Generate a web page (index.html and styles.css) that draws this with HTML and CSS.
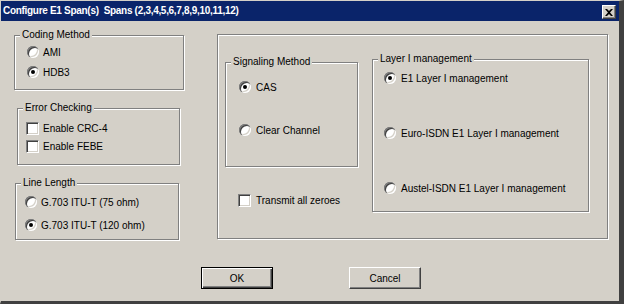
FILE: index.html
```html
<!DOCTYPE html>
<html>
<head>
    <title>Configure E1 Span(s)</title>
    <meta charset="UTF-8">
    <link rel="stylesheet" href="styles.css">
</head>
<body>

    <div class="window">

        <!-- Title bar -->
        <div class="titlebar">
            <span class="title">Configure E1 Span(s)&nbsp; Spans (2,3,4,5,6,7,8,9,10,11,12)</span>
            <span class="close-btn">
                <svg width="8" height="7" viewBox="0 0 8 7">
                    <path d="M0 0h2l2 2 2-2h2L5 3.5 8 7H6L4 5 2 7H0l3-3.5z" fill="#000"/>
                </svg>
            </span>
        </div>

        <div class="content">

            <!-- Left column -->
            <div class="left-col">
                <div class="group coding">
                    <div class="legend">Coding Method</div>
                    <div class="option"><span class="radio"></span>AMI</div>
                    <div class="option"><span class="radio checked"></span>HDB3</div>
                </div>

                <div class="group errors">
                    <div class="legend">Error Checking</div>
                    <div class="option"><span class="check"></span>Enable CRC-4</div>
                    <div class="option"><span class="check"></span>Enable FEBE</div>
                </div>

                <div class="group line">
                    <div class="legend">Line Length</div>
                    <div class="option"><span class="radio"></span>G.703 ITU-T (75 ohm)</div>
                    <div class="option"><span class="radio checked"></span>G.703 ITU-T (120 ohm)</div>
                </div>
            </div>

            <!-- Right panel -->
            <div class="group main">
                <div class="sub-col">
                    <div class="group signaling">
                        <div class="legend">Signaling Method</div>
                        <div class="option"><span class="radio checked"></span>CAS</div>
                        <div class="option"><span class="radio"></span>Clear Channel</div>
                    </div>
                    <div class="option transmit"><span class="check"></span>Transmit all zeroes</div>
                </div>

                <div class="group layer">
                    <div class="legend">Layer I management</div>
                    <div class="option"><span class="radio checked"></span>E1 Layer I management</div>
                    <div class="option"><span class="radio"></span>Euro-ISDN E1 Layer I management</div>
                    <div class="option"><span class="radio"></span>Austel-ISDN E1 Layer I management</div>
                </div>
            </div>

        </div>

        <!-- Buttons -->
        <div class="buttons">
            <button type="button" class="btn default">OK</button>
            <button type="button" class="btn">Cancel</button>
        </div>

    </div>

</body>
</html>
```

FILE: styles.css
```css
body {
    margin: 0;
    padding: 0;
    font-family: "Liberation Sans", Arial, sans-serif;
    font-size: 10px;
    color: #000;
    background-color: #d4d0c8;
}

.window {
    width: 624px;
    height: 304px;
    box-sizing: border-box;
    background-color: #d4d0c8;
    border-top: 1px solid #d4d0c8;
    border-left: 1px solid #d4d0c8;
    border-right: 5px solid #404040;
    border-bottom: 3px solid #404040;
}

/* Title bar */
.titlebar {
    height: 20px;
    background-color: #0a246a;
    display: flex;
    justify-content: space-between;
    align-items: flex-start;
}

.title {
    color: #fff;
    font-size: 10px;
    font-weight: bold;
    letter-spacing: -0.3px;
    line-height: 20px;
    padding-left: 2px;
    white-space: nowrap;
}

.close-btn {
    width: 14px;
    height: 14px;
    box-sizing: border-box;
    margin-top: 4px;
    margin-right: 3px;
    background-color: #d4d0c8;
    border: 1px solid;
    border-color: #fff #404040 #404040 #fff;
    box-shadow: inset -1px -1px 0 #808080;
    display: flex;
    justify-content: center;
    align-items: center;
}

/* Layout */
.content {
    display: flex;
    align-items: flex-start;
    height: 219px;
}

.left-col {
    width: 183px;
    flex: none;
}

/* Group boxes */
.group {
    box-sizing: border-box;
    border: 1px solid #808080;
    box-shadow: inset 1px 1px 0 #fff, 1px 1px 0 #fff;
    display: flex;
    flex-direction: column;
    flex: none;
}

.legend {
    align-self: flex-start;
    margin: -7px 0 0 5px;
    padding: 0 2px;
    height: 12px;
    line-height: 12px;
    background-color: #d4d0c8;
    white-space: nowrap;
}

.option {
    display: flex;
    align-items: center;
    gap: 5px;
    height: 16px;
    white-space: nowrap;
}

.coding {
    margin: 14px 0 0 13px;
    width: 170px;
    height: 55px;
}
.coding .option { margin: 4px 0 0 12px; gap: 4px; }
.coding .legend + .option { margin-top: 3px; }

.errors {
    margin: 18px 0 0 16px;
    width: 163px;
    height: 57px;
}
.errors .option { margin: 2px 0 0 8px; gap: 4px; }
.errors .legend + .option { margin-top: 6px; }

.line {
    margin: 18px 0 0 14px;
    width: 164px;
    height: 57px;
}
.line .option { margin: 7px 0 0 9px; gap: 4px; }
.line .legend + .option { margin-top: 5px; }

.main {
    margin: 13px 0 0 33px;
    width: 391px;
    height: 205px;
    flex-direction: row;
    align-items: flex-start;
}

.sub-col {
    margin: 27px 0 0 7px;
    display: flex;
    flex-direction: column;
}

.signaling {
    width: 133px;
    height: 105px;
}
.signaling .option { margin: 27px 0 0 13px; }
.signaling .legend + .option { margin-top: 11px; }

.transmit {
    margin: 25px 0 0 13px;
}

.layer {
    margin: 24px 0 0 14px;
    width: 217px;
    height: 153px;
}
.layer .option { margin: 39px 0 0 11px; }
.layer .legend + .option { margin-top: 5px; }

/* Radio buttons and check boxes */
.radio {
    width: 12px;
    height: 12px;
    flex: none;
    border-radius: 50%;
    background-color: #fff;
    box-shadow: inset 1px 1px 0 #808080, inset 2px 2px 0 #404040,
                inset -1px -1px 0 #fff, inset -2px -2px 0 #d4d0c8;
    display: flex;
    justify-content: center;
    align-items: center;
}

.radio.checked::after {
    content: "";
    width: 4px;
    height: 4px;
    border-radius: 50%;
    background-color: #000;
}

.check {
    width: 13px;
    height: 13px;
    flex: none;
    box-sizing: border-box;
    background-color: #fff;
    border: 1px solid;
    border-color: #808080 #fff #fff #808080;
    box-shadow: inset 1px 1px 0 #404040, inset -1px -1px 0 #d4d0c8;
}

/* Buttons */
.buttons {
    display: flex;
    gap: 76px;
    margin-top: 27px;
    padding-left: 200px;
}

.btn {
    width: 72px;
    height: 22px;
    padding: 0;
    font-family: "Liberation Sans", Arial, sans-serif;
    font-size: 10px;
    color: #000;
    background-color: #d4d0c8;
    border: 1px solid;
    border-color: #fff #404040 #404040 #fff;
    box-shadow: inset -1px -1px 0 #808080;
}

.btn.default {
    border-color: #000;
    box-shadow: inset 1px 1px 0 #fff, inset -1px -1px 0 #404040, inset -2px -2px 0 #808080;
}
```
